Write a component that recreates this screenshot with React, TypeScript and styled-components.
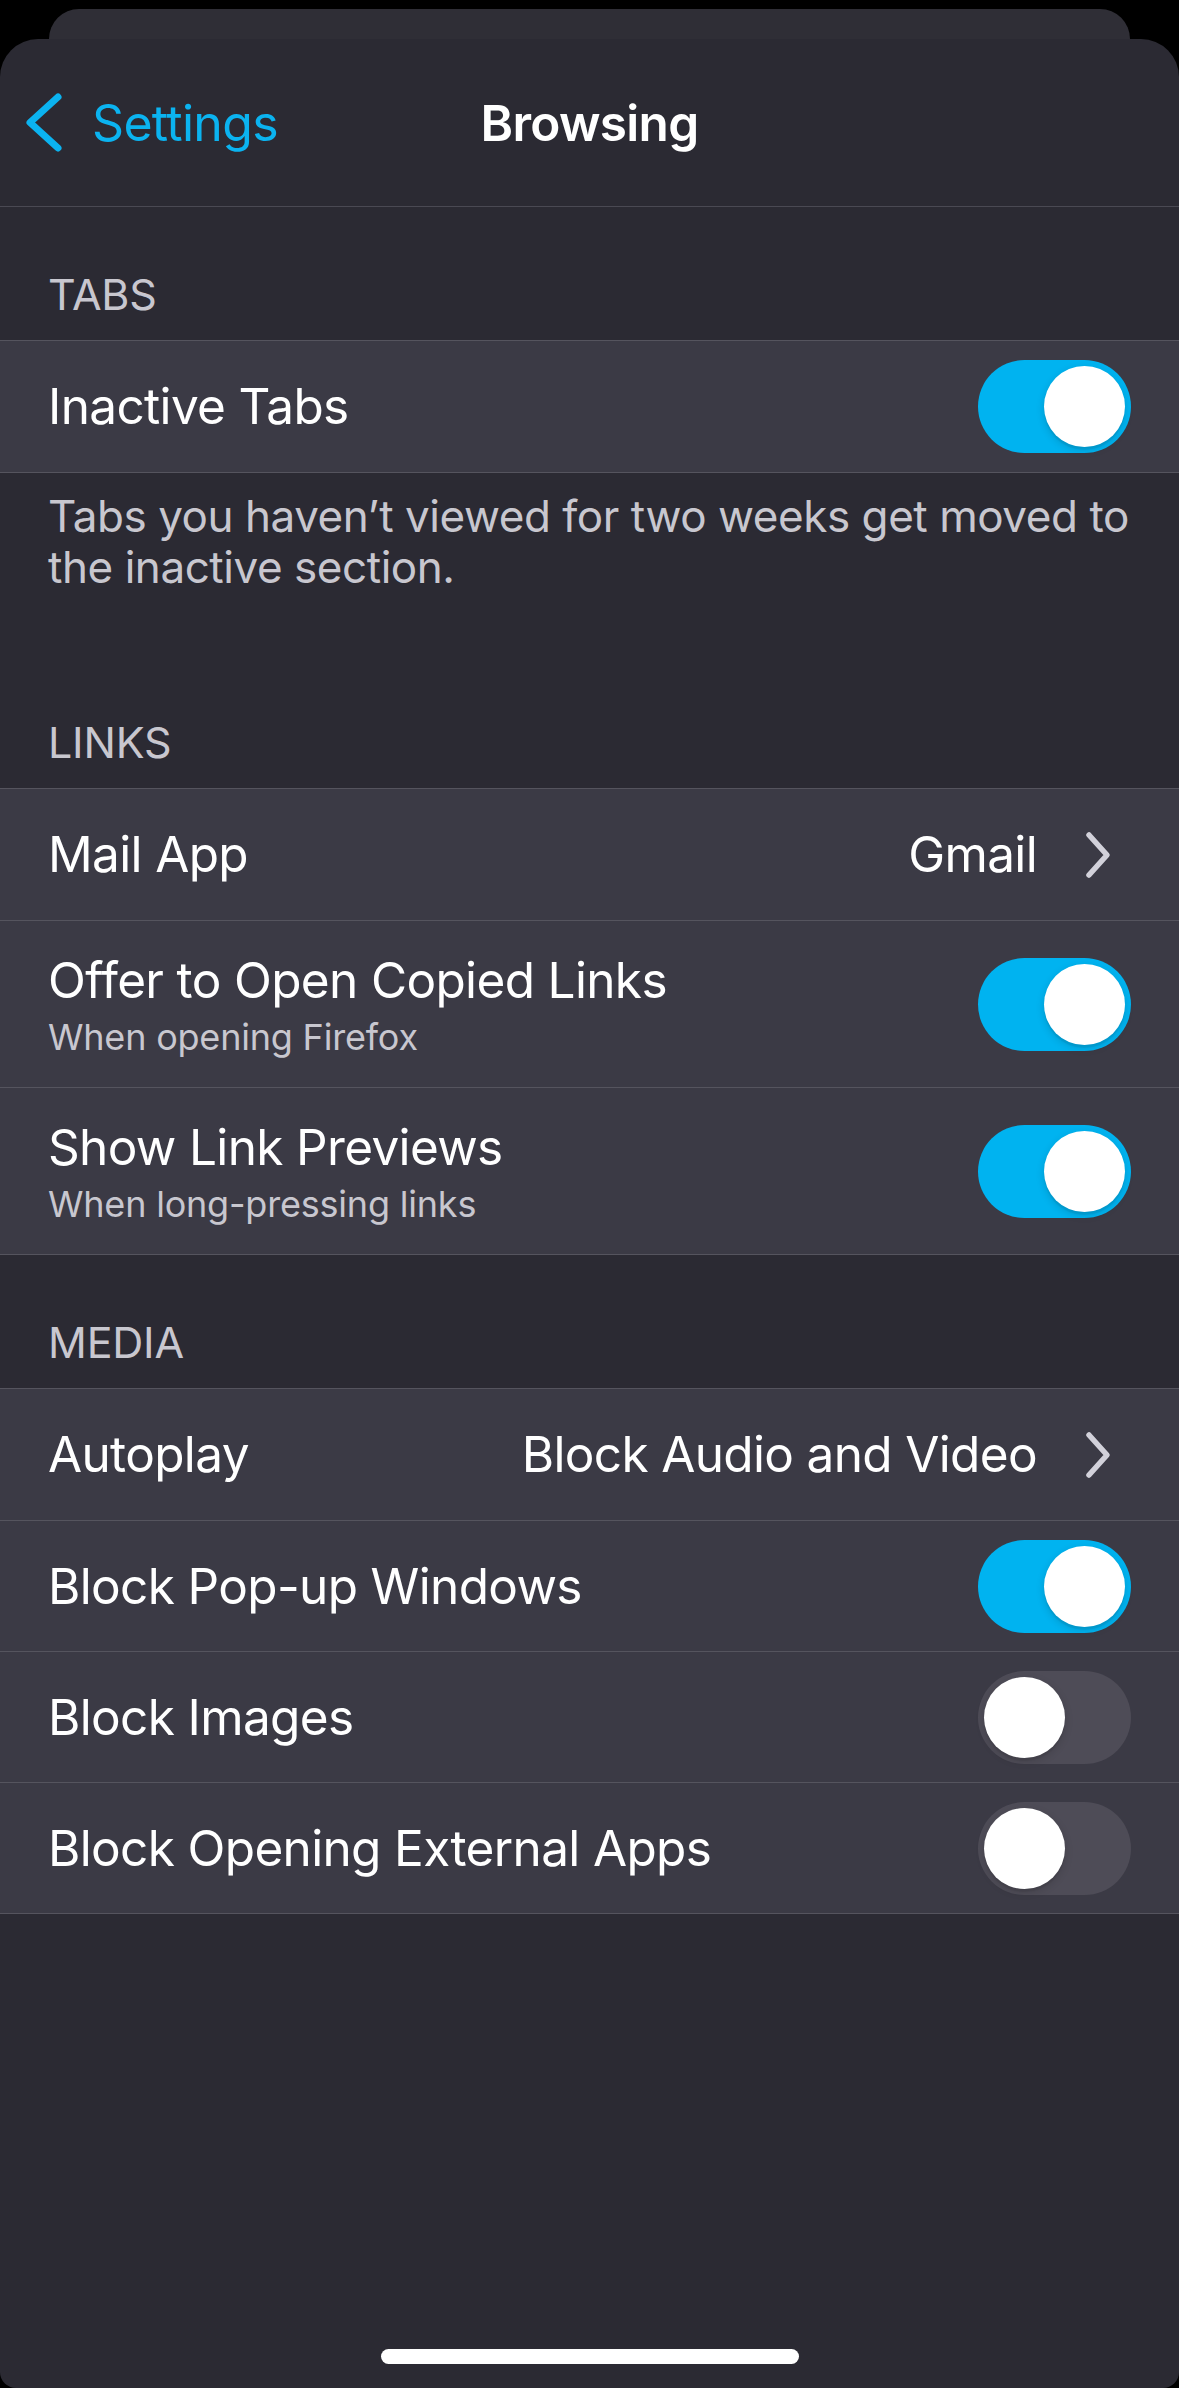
import React from "react";
import styled, { createGlobalStyle } from "styled-components";

const GlobalStyle = createGlobalStyle`
  html, body {
    margin: 0;
    padding: 0;
    background: #000000;
  }
  body {
    font-family: Inter, "Noto Sans", "Liberation Sans", sans-serif;
    -webkit-font-smoothing: antialiased;
  }
  * { box-sizing: border-box; }
`;

const Screen = styled.div`
  width: 1179px;
  height: 2388px;
  display: flex;
  flex-direction: column;
  background: #000000;
  overflow: hidden;
`;

const BackSheet = styled.div`
  height: 30px;
  margin: 9px 49px 0;
  background: #2f2e36;
  border-radius: 32px 32px 0 0;
  flex: none;
`;

const Sheet = styled.div`
  flex: 1;
  display: flex;
  flex-direction: column;
  background: #2b2a33;
  border-radius: 38px 38px 16px 16px;
`;

const NavBar = styled.header`
  height: 168px;
  display: grid;
  grid-template-columns: 1fr auto 1fr;
  align-items: center;
  border-bottom: 1px solid #4a4953;
  flex: none;
`;

const BackButton = styled.div`
  display: flex;
  align-items: center;
  gap: 28px;
  padding-left: 22px;
  color: #0bb3f0;
  font-size: 50px;
  letter-spacing: -0.7px;
`;

const Title = styled.h1`
  margin: 0;
  color: #ffffff;
  font-size: 49.5px;
  font-weight: 600;
  letter-spacing: -0.7px;
`;

const SectionHeader = styled.div`
  padding: 61px 48px 19px;
  font-size: 43px;
  line-height: 53px;
  color: #c8c7cf;
  text-transform: uppercase;
  letter-spacing: -0.2px;
`;

const Footer = styled.div`
  padding: 18px 48px 62px;
  font-size: 44px;
  line-height: 51px;
  color: #c8c7cf;
  white-space: nowrap;
  letter-spacing: -0.45px;
`;

const Group = styled.div`
  background: #3b3a45;
  border-top: 1px solid #55545e;
  border-bottom: 1px solid #55545e;
`;

const Row = styled.div<{ $tall?: boolean }>`
  display: flex;
  align-items: center;
  min-height: ${(p) => (p.$tall ? "167px" : "131px")};
  padding: 0 48px;
  & + & {
    border-top: 1px solid #55545e;
  }
`;

const Texts = styled.div`
  flex: 1;
  display: flex;
  flex-direction: column;
  gap: 5px;
`;

const Label = styled.div`
  color: #ffffff;
  font-size: 49.5px;
  line-height: 61px;
  letter-spacing: -0.65px;
`;

const Sub = styled.div`
  color: #c8c7cf;
  font-size: 36px;
  line-height: 43px;
  letter-spacing: -0.2px;
`;

const Value = styled.div`
  color: #ffffff;
  font-size: 49.5px;
  line-height: 61px;
  letter-spacing: -0.65px;
  margin-right: 48px;
`;

const ChevronIcon = styled.svg`
  width: 26px;
  height: 48px;
  margin-right: 20px;
  flex: none;
`;

const Track = styled.div<{ $on: boolean }>`
  width: 153px;
  height: 93px;
  border-radius: 47px;
  padding: 6px;
  flex: none;
  display: flex;
  justify-content: ${(p) => (p.$on ? "flex-end" : "flex-start")};
  background: ${(p) => (p.$on ? "#00b3f0" : "#4e4c57")};
`;

const Thumb = styled.div`
  width: 81px;
  height: 81px;
  border-radius: 50%;
  background: #ffffff;
  box-shadow: 0 3px 8px rgba(0, 0, 0, 0.15), 0 3px 1px rgba(0, 0, 0, 0.06);
`;

const HomeIndicator = styled.div`
  margin: auto auto 24px;
  width: 418px;
  height: 15px;
  border-radius: 8px;
  background: #ffffff;
`;

const Toggle = ({ on }: { on: boolean }) => (
  <Track $on={on}>
    <Thumb />
  </Track>
);

const Chevron = () => (
  <ChevronIcon viewBox="0 0 26 48">
    <path
      d="M4 4 L22 24 L4 44"
      fill="none"
      stroke="#d2d1da"
      strokeWidth="5.5"
      strokeLinecap="round"
      strokeLinejoin="round"
    />
  </ChevronIcon>
);

const BackChevron = () => (
  <svg width="42" height="62" viewBox="0 0 42 62">
    <path
      d="M36 5 L8 30.5 L36 56"
      fill="none"
      stroke="#0bb3f0"
      strokeWidth="7"
      strokeLinecap="round"
      strokeLinejoin="round"
    />
  </svg>
);

type Item =
  | { kind: "toggle"; label: string; sub?: string; on: boolean }
  | { kind: "link"; label: string; value: string };

const Section = ({ title, items, footer }: { title: string; items: Item[]; footer?: React.ReactNode }) => (
  <>
    <SectionHeader>{title}</SectionHeader>
    <Group>
      {items.map((it) => (
        <Row key={it.label} $tall={it.kind === "toggle" && !!it.sub}>
          <Texts>
            <Label>{it.label}</Label>
            {it.kind === "toggle" && it.sub && <Sub>{it.sub}</Sub>}
          </Texts>
          {it.kind === "toggle" ? (
            <Toggle on={it.on} />
          ) : (
            <>
              <Value>{it.value}</Value>
              <Chevron />
            </>
          )}
        </Row>
      ))}
    </Group>
    {footer && <Footer>{footer}</Footer>}
  </>
);

export default function App() {
  return (
    <Screen>
      <GlobalStyle />
      <BackSheet />
      <Sheet>
        <NavBar>
          <BackButton>
            <BackChevron />
            <span>Settings</span>
          </BackButton>
          <Title>Browsing</Title>
          <div />
        </NavBar>
        <Section
          title="Tabs"
          items={[{ kind: "toggle", label: "Inactive Tabs", on: true }]}
          footer={
            <>
              Tabs you haven’t viewed for two weeks get moved to
              <br />
              the inactive section.
            </>
          }
        />
        <Section
          title="Links"
          items={[
            { kind: "link", label: "Mail App", value: "Gmail" },
            { kind: "toggle", label: "Offer to Open Copied Links", sub: "When opening Firefox", on: true },
            { kind: "toggle", label: "Show Link Previews", sub: "When long-pressing links", on: true },
          ]}
        />
        <Section
          title="Media"
          items={[
            { kind: "link", label: "Autoplay", value: "Block Audio and Video" },
            { kind: "toggle", label: "Block Pop-up Windows", on: true },
            { kind: "toggle", label: "Block Images", on: false },
            { kind: "toggle", label: "Block Opening External Apps", on: false },
          ]}
        />
        <HomeIndicator />
      </Sheet>
    </Screen>
  );
}
